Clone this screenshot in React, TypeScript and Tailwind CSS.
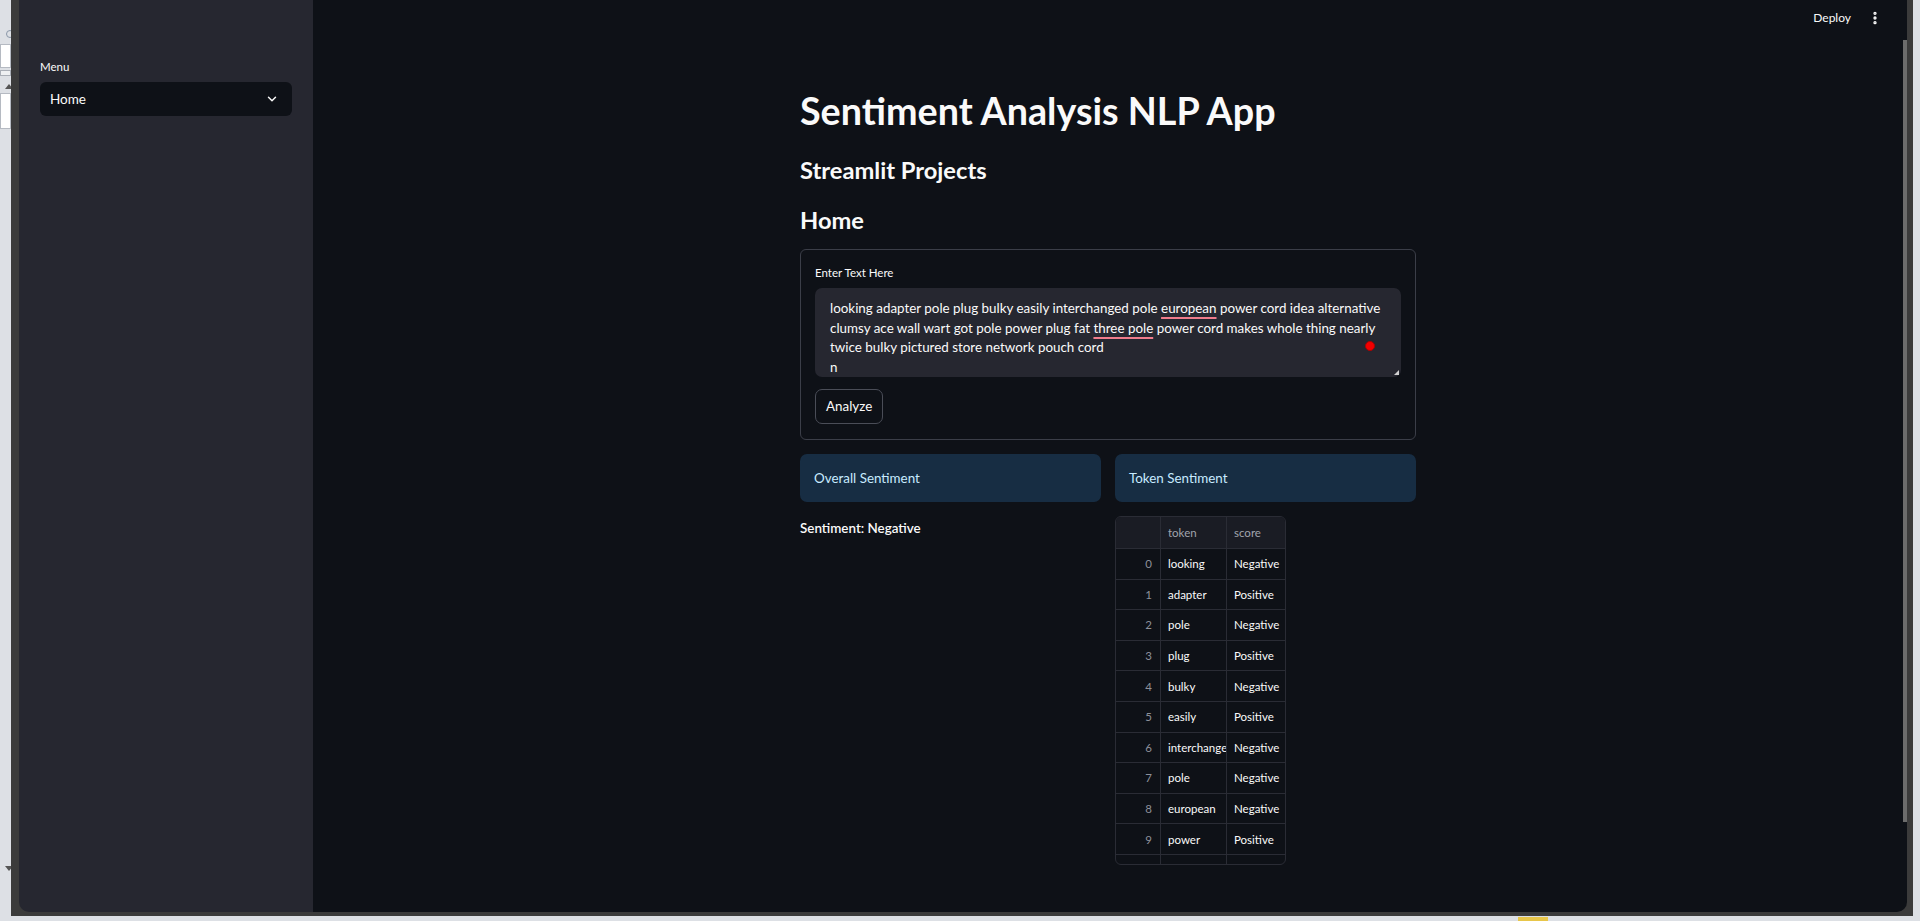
import { ChevronDown, EllipsisVertical } from 'lucide-react'

const tokens: [string, string][] = [
  ['looking', 'Negative'],
  ['adapter', 'Positive'],
  ['pole', 'Negative'],
  ['plug', 'Positive'],
  ['bulky', 'Negative'],
  ['easily', 'Positive'],
  ['interchanged', 'Negative'],
  ['pole', 'Negative'],
  ['european', 'Negative'],
  ['power', 'Positive'],
  ['cord', 'Negative'],
  ['idea', 'Positive'],
]

function DesktopStrip() {
  return (
    <div className="flex w-[11px] shrink-0 flex-col bg-[#dde0e5]">
      <div className="mt-[30px] ml-[6px] h-[8px] w-[8px] rounded-full border border-[#8a97a8]" />
      <div className="mt-[6px] h-[24px] border border-[#b5bac2] bg-white" />
      <div className="mt-[2px] h-[6px] border border-[#a9aeb6] bg-[#eef0f2]" />
      <div className="mt-[8px] ml-[5px] h-0 w-0 border-x-[4px] border-b-[5px] border-x-transparent border-b-[#555]" />
      <div className="mt-[4px] h-[36px] border border-[#b5bac2] bg-white" />
      <div className="flex-1" />
      <div className="mb-[50px] ml-[5px] h-0 w-0 border-x-[4px] border-t-[5px] border-x-transparent border-t-[#555]" />
    </div>
  )
}

function Sidebar() {
  return (
    <aside className="w-[294px] shrink-0 bg-[#262730] px-[21px] pt-[59px]">
      <div className="text-[11.5px] leading-[16px] text-[#fafafa]">Menu</div>
      <div className="mt-[7px] flex h-[34px] items-center justify-between rounded-[6px] bg-[#0e1117] pl-[10px] pr-[13px]">
        <span className="text-[13.5px] text-[#fafafa]">Home</span>
        <ChevronDown className="h-[14px] w-[14px] text-[#fafafa]" strokeWidth={2.5} />
      </div>
    </aside>
  )
}

function TokenTable() {
  return (
    <div className="mt-[14px] h-[349px] w-[171px] overflow-hidden rounded-[6px] border border-[#2a2c35] text-[11.5px]">
      <div className="flex h-[31px] items-center bg-[#1a1c24] text-[#a1a4ad]">
        <div className="h-full w-[45px] border-r border-[#2a2c35]" />
        <div className="flex h-full w-[66px] items-center border-r border-[#2a2c35] pl-[7px]">token</div>
        <div className="flex h-full flex-1 items-center pl-[7px]">score</div>
      </div>
      {tokens.map(([tok, score], i) => (
        <div key={i} className="flex h-[30.6px] items-center border-t border-[#2a2c35] text-[#fafafa]">
          <div className="flex h-full w-[45px] items-center justify-end border-r border-[#2a2c35] pr-[8px] text-[#8d909a]">{i}</div>
          <div className="flex h-full w-[66px] items-center overflow-hidden whitespace-nowrap border-r border-[#2a2c35] pl-[7px]">{tok}</div>
          <div className="flex h-full flex-1 items-center whitespace-nowrap pl-[7px]">{score}</div>
        </div>
      ))}
    </div>
  )
}

function InfoBox({ text }: { text: string }) {
  return (
    <div className="flex h-[48px] items-center rounded-[7px] bg-[#172d43] px-[14px] text-[13.4px] text-[#c7ebff]">
      {text}
    </div>
  )
}

function MainArea() {
  return (
    <main className="flex flex-1 bg-[#0e1117]">
      <div className="flex flex-1 flex-col">
        <header className="flex h-[36px] items-center justify-end gap-[16px] pr-[20px]">
          <span className="text-[12px] text-[#fafafa]">Deploy</span>
          <EllipsisVertical className="h-[18px] w-[16px] text-[#fafafa]" strokeWidth={3} />
        </header>
        <div className="mx-auto mt-[53px] w-[616px] text-[#fafafa]">
          <h1 className="text-[37.7px] font-bold leading-[44px]">Sentiment Analysis NLP App</h1>
          <h3 className="mt-[22px] text-[23.7px] font-bold leading-[30px]">Streamlit Projects</h3>
          <h3 className="mt-[20px] text-[23.7px] font-bold leading-[30px]">Home</h3>

          <div className="mt-[14px] rounded-[6px] border border-[#3b3e48] px-[14px] pt-[15px] pb-[15px]">
            <div className="text-[11.5px] leading-[16px]">Enter Text Here</div>
            <div className="relative mt-[7px] h-[89px] overflow-hidden rounded-[7px] bg-[#262730] px-[15px] pt-[11px] text-[13.4px] leading-[19.6px]">
              <div>
                looking adapter pole plug bulky easily interchanged pole{' '}
                <span className="underline decoration-[#f07c8c] decoration-2 underline-offset-[4px]">european</span> power cord idea alternative
              </div>
              <div>
                clumsy ace wall wart got pole power plug fat{' '}
                <span className="underline decoration-[#f07c8c] decoration-2 underline-offset-[4px]">three pole</span> power cord makes whole thing nearly
              </div>
              <div>twice bulky pictured store network pouch cord</div>
              <div>n</div>
              <div className="absolute top-[53px] right-[26px] h-[10px] w-[10px] rounded-full border border-[#b00000] bg-[#f20000]" />
              <div className="absolute right-[2px] bottom-[2px] h-0 w-0 border-l-[5px] border-t-[5px] border-l-transparent border-t-transparent border-b-0 border-r-[5px] border-r-[#d0d0d0]" />
            </div>
            <button className="mt-[12px] h-[35px] rounded-[7px] border border-[#4a4d57] px-[10px] text-[13.4px] text-[#fafafa]">
              Analyze
            </button>
          </div>

          <div className="mt-[14px] grid grid-cols-2 gap-[14px]">
            <div>
              <InfoBox text="Overall Sentiment" />
              <div className="mt-[15px] text-[13.4px] font-semibold leading-[22px]">Sentiment: Negative</div>
            </div>
            <div>
              <InfoBox text="Token Sentiment" />
              <TokenTable />
            </div>
          </div>
        </div>
      </div>
      <div className="w-[4px] pt-[40px]">
        <div className="h-[782px] bg-[#6c6c6c]" />
      </div>
    </main>
  )
}

export default function App() {
  return (
    <div className="relative flex h-[921px] w-full overflow-hidden bg-[#dde0e5] font-['Lato',sans-serif]">
      <DesktopStrip />
      <div className="h-[916px] w-[1902px] shrink-0 bg-[#3b3b3b] pl-[8px] pr-[6px] pb-[4px]">
        <div className="flex h-[912px] w-[1888px] overflow-hidden rounded-b-[10px]">
          <Sidebar />
          <MainArea />
        </div>
      </div>
      <div className="flex-1 bg-[#dde0e5]" />
      <div className="absolute bottom-0 left-[1518px] h-[4px] w-[30px] bg-[#e8c64a]" />
    </div>
  )
}
